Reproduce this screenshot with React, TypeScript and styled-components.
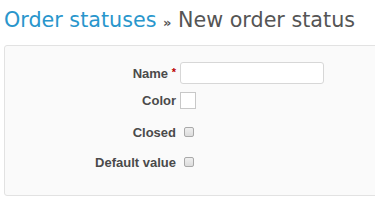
import React from 'react'
import styled, { createGlobalStyle } from 'styled-components'

const GlobalStyle = createGlobalStyle`
  html, body {
    margin: 0;
    padding: 0;
    background: #fff;
  }
  body {
    font-family: "Liberation Sans", Arial, sans-serif;
    font-size: 13px;
    color: #484848;
  }
`

const Page = styled.div`
  padding: 0 0 0 4px;
  overflow: hidden;
`

const Title = styled.h2`
  margin: 0;
  padding: 7px 0 0;
  height: 38px;
  box-sizing: border-box;
  font-family: "DejaVu Sans", Verdana, sans-serif;
  font-weight: normal;
  font-size: 20.7px;
  line-height: 26px;
  color: #555;
  white-space: nowrap;
`

const Crumb = styled.a`
  color: #2996cc;
  text-decoration: none;
`

const Sep = styled.span`
  font-size: 13px;
  font-weight: bold;
  color: #555;
`

const Box = styled.div`
  margin-top: 7px;
  width: 420px;
  height: 151px;
  box-sizing: border-box;
  background: #fafafa;
  border: 1px solid #e2e2e2;
  border-radius: 3px;
  padding-top: 12px;
`

const Row = styled.div<{ $h: number; $mt?: number }>`
  display: grid;
  grid-template-columns: 171px auto;
  column-gap: 4px;
  align-items: center;
  height: ${(p) => p.$h}px;
  margin-top: ${(p) => p.$mt ?? 0}px;
`

const Label = styled.label`
  text-align: right;
  font-weight: bold;
  font-size: 13px;
  color: #4a4a4a;
`

const Required = styled.span`
  color: #bb0000;
  font-size: 11px;
  vertical-align: 2px;
`

const TextInput = styled.input`
  width: 144px;
  height: 22px;
  box-sizing: border-box;
  border: 1px solid #d7d7d7;
  border-radius: 3px;
  background: #fff;
  padding: 2px 4px;
  outline: none;
`

const Swatch = styled.span`
  display: block;
  width: 16px;
  height: 17px;
  box-sizing: border-box;
  border: 1px solid #c8c8c8;
  background: #fff;
`

const Check = styled.input`
  appearance: none;
  -webkit-appearance: none;
  margin: 0 0 0 4px;
  width: 10px;
  height: 10px;
  box-sizing: border-box;
  border: 1px solid #a9a9a9;
  border-radius: 2px;
  background: linear-gradient(#efefef, #dcdcdc);
`

export default function App() {
  return (
    <Page>
      <GlobalStyle />
      <Title>
        <Crumb href="#">Order statuses</Crumb> <Sep>»</Sep> New order status
      </Title>
      <Box>
        <Row $h={30}>
          <Label>
            Name <Required>*</Required>
          </Label>
          <TextInput type="text" />
        </Row>
        <Row $h={24}>
          <Label>Color</Label>
          <Swatch />
        </Row>
        <Row $h={30} $mt={5}>
          <Label>Closed</Label>
          <Check type="checkbox" />
        </Row>
        <Row $h={30}>
          <Label>Default value</Label>
          <Check type="checkbox" />
        </Row>
      </Box>
    </Page>
  )
}
